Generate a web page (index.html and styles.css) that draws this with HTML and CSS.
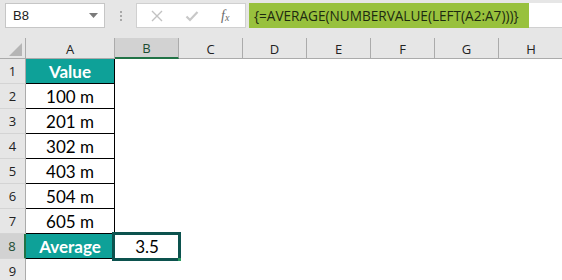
FILE: index.html
```html
<!DOCTYPE html>
<html>
<head>
<meta charset="utf-8">
<link rel="stylesheet" href="styles.css">
</head>
<body>
<div class="app">
  <div class="toolbar">
    <div class="namebox"><span class="nb-text">B8</span><svg class="nb-arrow" width="9" height="5" viewBox="0 0 9 5"><path d="M0 0H9L4.5 5Z" fill="#7a7a7a"/></svg></div>
    <div class="grip"><i></i><i></i><i></i></div>
    <div class="fbtns">
      <svg width="14" height="14" viewBox="0 0 14 14"><path d="M2 2L12 12M12 2L2 12" stroke="#c2c2c2" stroke-width="1.4" fill="none"/></svg>
      <svg width="14" height="14" viewBox="0 0 14 14"><path d="M1.5 7.5L5 11L12.5 3" stroke="#c8c8c8" stroke-width="2.2" fill="none"/></svg>
      <span class="fx">f<sub>x</sub></span>
    </div>
    <div class="formula">{=AVERAGE(NUMBERVALUE(LEFT(A2:A7)))}</div>
    <div class="formula-rest"></div>
  </div>
  <div class="sheet">
    <div class="corner"><svg width="13" height="13" viewBox="0 0 13 13"><path d="M13 0V13H0Z" fill="#b5b5b5"/></svg></div>
    <div class="ch">A</div>
    <div class="ch sel">B</div>
    <div class="ch">C</div>
    <div class="ch">D</div>
    <div class="ch">E</div>
    <div class="ch">F</div>
    <div class="ch">G</div>
    <div class="ch last">H</div>

    <div class="rh">1</div><div class="c a head">Value</div><div class="c"></div><div class="c"></div><div class="c"></div><div class="c"></div><div class="c"></div><div class="c"></div><div class="c"></div>
    <div class="rh">2</div><div class="c a">100 m</div><div class="c"></div><div class="c"></div><div class="c"></div><div class="c"></div><div class="c"></div><div class="c"></div><div class="c"></div>
    <div class="rh">3</div><div class="c a">201 m</div><div class="c"></div><div class="c"></div><div class="c"></div><div class="c"></div><div class="c"></div><div class="c"></div><div class="c"></div>
    <div class="rh">4</div><div class="c a">302 m</div><div class="c"></div><div class="c"></div><div class="c"></div><div class="c"></div><div class="c"></div><div class="c"></div><div class="c"></div>
    <div class="rh">5</div><div class="c a">403 m</div><div class="c"></div><div class="c"></div><div class="c"></div><div class="c"></div><div class="c"></div><div class="c"></div><div class="c"></div>
    <div class="rh">6</div><div class="c a">504 m</div><div class="c"></div><div class="c"></div><div class="c"></div><div class="c"></div><div class="c"></div><div class="c"></div><div class="c"></div>
    <div class="rh">7</div><div class="c a">605 m</div><div class="c"></div><div class="c"></div><div class="c"></div><div class="c"></div><div class="c"></div><div class="c"></div><div class="c"></div>
    <div class="rh sel">8</div><div class="c a head">Average</div><div class="c b8">3.5<span class="selbox"><span class="handle"></span></span></div><div class="c"></div><div class="c"></div><div class="c"></div><div class="c"></div><div class="c"></div><div class="c"></div>
    <div class="rh">9</div><div class="c"></div><div class="c"></div><div class="c"></div><div class="c"></div><div class="c"></div><div class="c"></div><div class="c"></div><div class="c"></div>
  </div>
</div>
</body>
</html>
```

FILE: styles.css
```css
html, body {
  margin: 0;
  padding: 0;
  background: #ffffff;
}
.app {
  width: 562px;
  height: 280px;
  overflow: hidden;
  font-family: "Lato", "Open Sans", sans-serif;
}
.toolbar {
  display: flex;
  align-items: flex-start;
  background: #e6e6e6;
  height: 38px;
  padding-top: 3px;
  box-sizing: border-box;
}
.namebox {
  margin-left: 5px;
  width: 100px;
  height: 25px;
  box-sizing: border-box;
  background: #fff;
  border: 1px solid #c6c6c6;
  display: flex;
  align-items: center;
  justify-content: space-between;
  padding: 0 6px 0 7px;
}
.nb-text {
  font-family: "Liberation Sans", sans-serif;
  font-size: 13px;
  color: #222;
}
.grip {
  width: 31px;
  display: flex;
  flex-direction: column;
  align-items: center;
  gap: 2px;
  padding-top: 8px;
}
.grip i {
  display: block;
  width: 2px;
  height: 2px;
  background: #a8a8a8;
}
.fbtns {
  width: 110px;
  height: 25px;
  box-sizing: border-box;
  background: #fff;
  border: 1px solid #d0d0d0;
  display: flex;
  align-items: center;
  padding-left: 13px;
  gap: 21px;
}
.fx {
  font-family: "Liberation Serif", serif;
  font-style: italic;
  font-size: 14px;
  color: #6a6a6a;
  margin-left: 1px;
}
.fx sub {
  font-size: 10px;
  vertical-align: -1px;
}
.formula {
  margin-left: 3px;
  width: 280px;
  height: 25px;
  box-sizing: border-box;
  background: #98c13d;
  color: #1d2a10;
  font-family: "Open Sans", sans-serif;
  font-size: 13.6px;
  line-height: 25px;
  padding-left: 5px;
  white-space: nowrap;
  overflow: hidden;
}
.formula-rest {
  flex: 1;
  height: 25px;
  background: #fff;
  border-bottom: 1px solid #d0d0d0;
  box-sizing: border-box;
}
.sheet {
  display: grid;
  grid-template-columns: 26px 89px repeat(7, 64px);
  grid-template-rows: 21px repeat(9, 25px);
}
.corner {
  background: #e6e6e6;
  border-right: 1px solid #ababab;
  border-bottom: 1px solid #ababab;
  box-sizing: border-box;
  display: flex;
  align-items: flex-end;
  justify-content: flex-end;
  padding: 0 3px 2px 0;
}
.ch {
  background: #e6e6e6;
  border-right: 1px solid #ababab;
  border-bottom: 1px solid #ababab;
  box-sizing: border-box;
  display: flex;
  align-items: center;
  justify-content: center;
  font-family: "Open Sans", sans-serif;
  font-size: 13px;
  color: #222;
  padding-top: 1px;
}
.ch.sel {
  background: #d2d2d2;
  border-bottom: 2px solid #217346;
  color: #1b4c32;
}
.ch.last {
  border-right: none;
}
.rh {
  background: #e6e6e6;
  border-right: 1px solid #ababab;
  border-bottom: 1px solid #d4d4d4;
  box-sizing: border-box;
  display: flex;
  align-items: center;
  justify-content: center;
  font-family: "Open Sans", sans-serif;
  font-size: 13px;
  color: #222;
}
.rh.sel {
  background: #d2d2d2;
  border-right: 2px solid #217346;
  color: #1b4c32;
}
.c {
  box-sizing: border-box;
  display: flex;
  align-items: center;
  justify-content: center;
  font-size: 17px;
  color: #000;
}
.c.a {
  border-right: 1px solid #000;
  border-bottom: 1px solid #000;
}
.c.head {
  background: #0ea198;
  color: #fff;
  font-weight: 700;
}
.b8 {
  position: relative;
}
.selbox {
  position: absolute;
  left: -3px;
  top: -2px;
  right: -2px;
  bottom: -2px;
  border: 3px solid #0c524e;
}
.handle {
  position: absolute;
  right: -3px;
  bottom: -3px;
  width: 3px;
  height: 3px;
  background: #2a9a60;
}
```
